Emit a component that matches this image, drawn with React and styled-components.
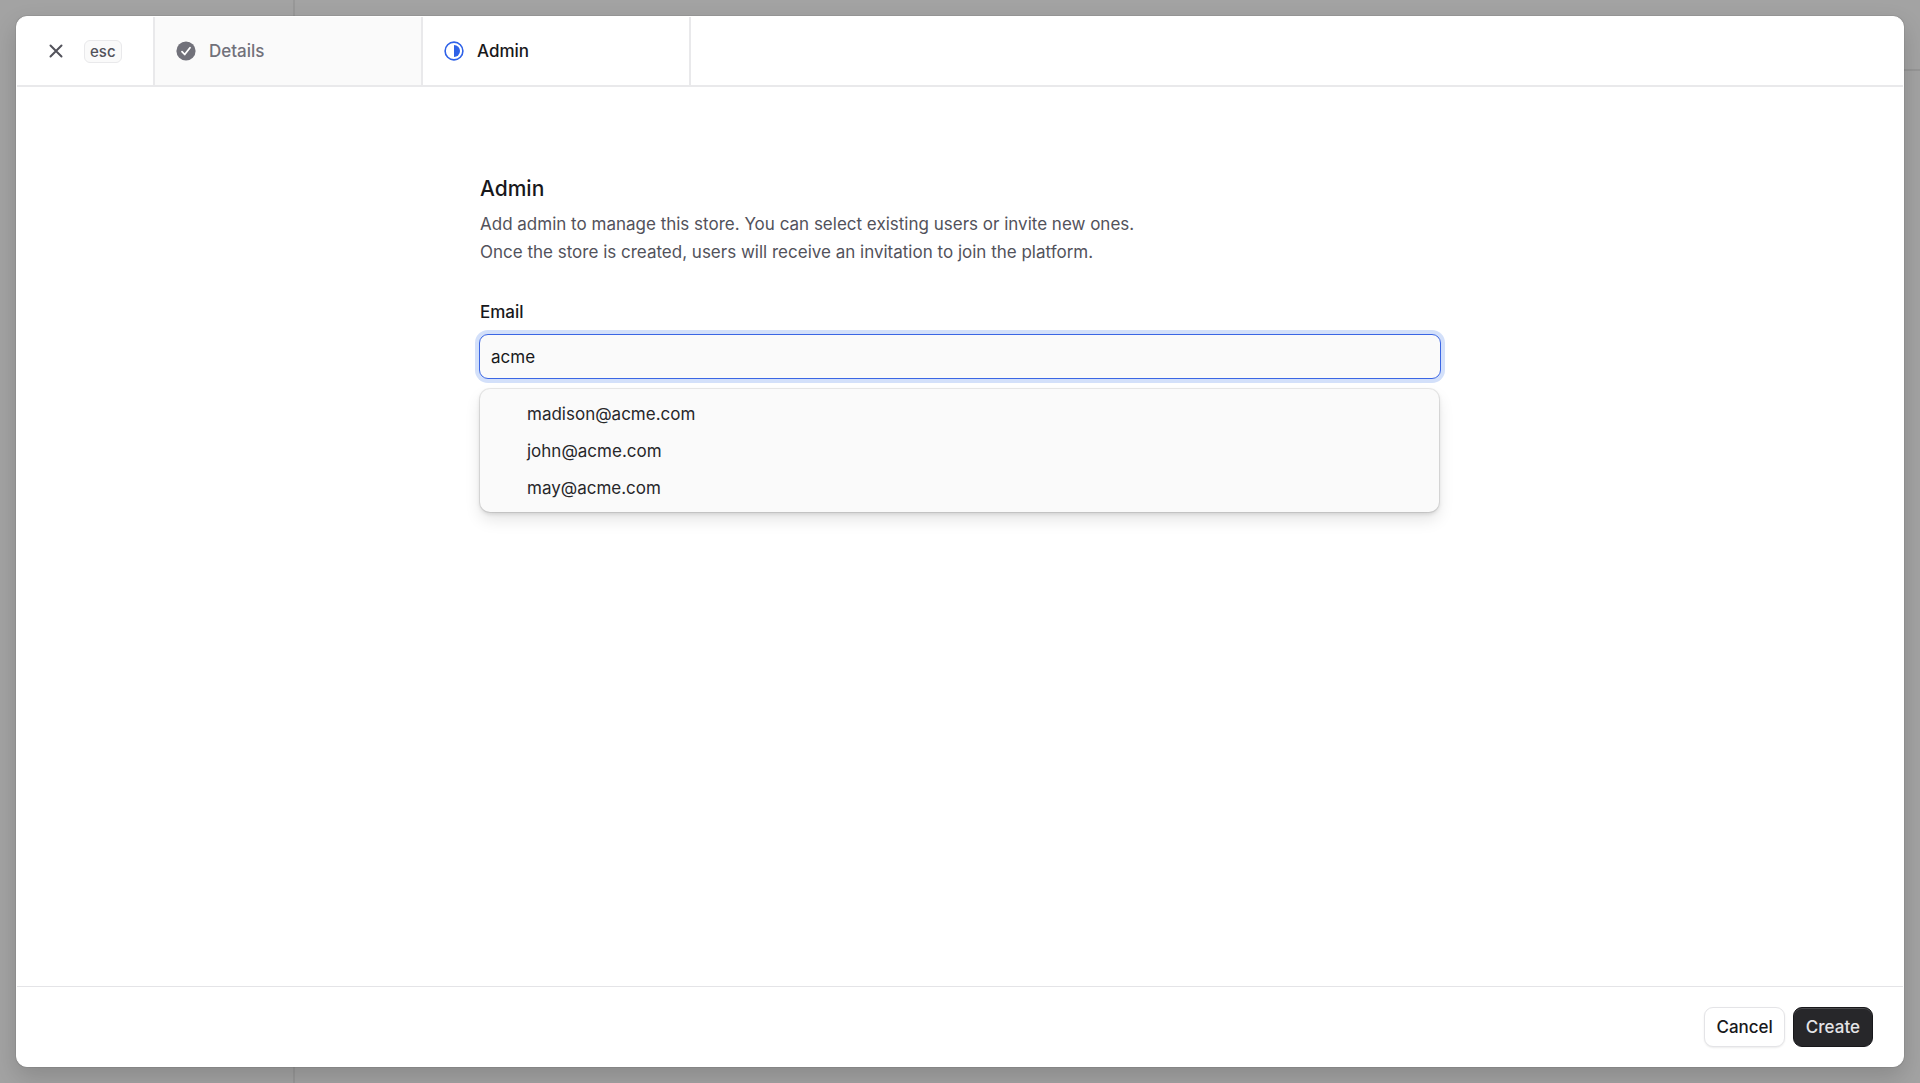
import React, { useState } from "react";
import styled, { createGlobalStyle } from "styled-components";

const GlobalStyle = createGlobalStyle`
  *, *::before, *::after { box-sizing: border-box; }
  body {
    margin: 0;
    background: #a3a3a3;
    color: #18181b;
    font-family: Inter, "Liberation Sans", sans-serif;
    font-size: 17px;
    line-height: 28px;
    -webkit-font-smoothing: antialiased;
  }
  h1, p, ol, ul { margin: 0; padding: 0; }
  ol, ul { list-style: none; }
  button, input { font: inherit; color: inherit; }
`;

const Page = styled.div`
  display: grid;
  min-height: 100vh;
  overflow: hidden;
`;

const Backdrop = styled.div`
  grid-area: 1 / 1;
  display: grid;
  grid-template-columns: 295px 1fr;
`;

const Sidebar = styled.div`
  border-right: 2px solid #989898;
`;

const Topbar = styled.div`
  height: 71px;
  border-bottom: 2px solid #969696;
`;

const Modal = styled.section`
  grid-area: 1 / 1;
  z-index: 1;
  display: flex;
  flex-direction: column;
  margin: 16px;
  overflow: hidden;
  border: 1px solid #fff;
  border-radius: 11px;
  background: #fff;
  box-shadow: 0 0 0 1px rgba(0, 0, 0, 0.06), 0 10px 24px rgba(0, 0, 0, 0.16);
`;

const Header = styled.header`
  display: flex;
  height: 70px;
  border-bottom: 2px solid #e9e9eb;
`;

const CloseArea = styled.div`
  display: flex;
  align-items: center;
  gap: 9px;
  width: 138px;
  padding-left: 20px;
  border-right: 2px solid #e9e9eb;
`;

const CloseButton = styled.button`
  display: grid;
  place-items: center;
  width: 38px;
  height: 38px;
  padding: 0;
  border: 0;
  border-radius: 8px;
  background: transparent;
  color: #52525b;
`;

const Key = styled.kbd`
  padding: 0 5px;
  border: 1px solid #e9e9eb;
  border-radius: 6px;
  background: #fafafa;
  color: #52525b;
  font-family: inherit;
  font-size: 15px;
  font-weight: 500;
  line-height: 21px;
`;

const Steps = styled.ol`
  display: flex;
`;

const Step = styled.li`
  display: flex;
  width: 268px;
  border-right: 2px solid #e9e9eb;
`;

const StepButton = styled.button`
  display: flex;
  flex: 1;
  align-items: center;
  gap: 13px;
  padding: 0 21px;
  border: 0;
  background: ${(p) => (p.$active ? "#fff" : "#fafafa")};
  color: ${(p) => (p.$active ? "#18181b" : "#71717a")};
  font-weight: 500;
`;

const Content = styled.main`
  flex: 1;
  padding: 87px 24px;
`;

const Form = styled.form`
  display: flex;
  flex-direction: column;
  gap: 32px;
  max-width: 960px;
  margin: 0 auto;
`;

const Title = styled.h1`
  margin-bottom: 6px;
  font-size: 21px;
  font-weight: 500;
  line-height: 30px;
`;

const Hint = styled.p`
  color: #52525b;
`;

const Field = styled.div`
  position: relative;
  display: flex;
  flex-direction: column;
  gap: 8px;
`;

const Label = styled.label`
  font-weight: 500;
`;

const TextInput = styled.input`
  height: 45px;
  margin: 0 -1px;
  padding: 0 11px;
  border: 1px solid #3b66e4;
  border-radius: 9px;
  outline: none;
  background: #fafafa;
  box-shadow: 0 0 0 4px #d3e0fa;
`;

const Options = styled.ul`
  position: absolute;
  top: calc(100% + 10px);
  left: 0;
  right: 1px;
  padding: 7px 6px 5px;
  border-radius: 10px;
  background: #fafafa;
  box-shadow: 0 0 0 1px rgba(0, 0, 0, 0.08), 0 2px 4px rgba(0, 0, 0, 0.12),
    0 8px 16px rgba(0, 0, 0, 0.1);
`;

const Option = styled.li`
  padding: 0 41px;
  color: #27272a;
  line-height: 37px;
`;

const Footer = styled.footer`
  display: flex;
  justify-content: flex-end;
  gap: 8px;
  padding: 20px 30px 19px;
  border-top: 1px solid #e4e4e7;
`;

const Button = styled.button`
  height: 40px;
  padding: 0 11px;
  border: 1px solid ${(p) => (p.$primary ? "#18181b" : "#e4e4e7")};
  border-radius: 9px;
  background: ${(p) => (p.$primary ? "#27272a" : "#fff")};
  color: ${(p) => (p.$primary ? "#e4e4e7" : "#18181b")};
  padding: 0 ${(p) => (p.$primary ? 12 : 11)}px;
  font-weight: 500;
  box-shadow: ${(p) =>
    p.$primary
      ? "inset 0 1px 0 #4a4a4d"
      : "0 1px 2px rgba(0, 0, 0, 0.08)"};
`;

const CloseIcon = () => (
  <svg width="14" height="14" viewBox="0 0 14 14" fill="none" aria-hidden="true">
    <path d="M1.5 1.5l11 11M12.5 1.5l-11 11" stroke="currentColor" strokeWidth="2" strokeLinecap="round" />
  </svg>
);

const DoneIcon = () => (
  <svg width="20" height="20" viewBox="0 0 20 20" fill="none" aria-hidden="true">
    <circle cx="10" cy="10" r="9.6" fill="#71717a" />
    <path d="M6 10.7l2.7 2.8L14 6.8" stroke="#fff" strokeWidth="1.8" strokeLinecap="round" strokeLinejoin="round" />
  </svg>
);

const CurrentIcon = () => (
  <svg width="20" height="20" viewBox="0 0 20 20" fill="none" aria-hidden="true">
    <circle cx="10" cy="10" r="8.9" stroke="#2f62e8" strokeWidth="1.6" />
    <path d="M10 4a6 6 0 0 1 0 12z" fill="#2f62e8" />
  </svg>
);

const people = ["madison@acme.com", "john@acme.com", "may@acme.com"];

export default function App() {
  const [email, setEmail] = useState("acme");
  return (
    <>
      <GlobalStyle />
      <Page>
        <Backdrop>
          <Sidebar />
          <Topbar />
        </Backdrop>
        <Modal role="dialog" aria-labelledby="admin-title">
          <Header>
            <CloseArea>
              <CloseButton type="button" aria-label="Close">
                <CloseIcon />
              </CloseButton>
              <Key>esc</Key>
            </CloseArea>
            <Steps>
              <Step>
                <StepButton type="button">
                  <DoneIcon />
                  Details
                </StepButton>
              </Step>
              <Step>
                <StepButton type="button" $active aria-current="step">
                  <CurrentIcon />
                  Admin
                </StepButton>
              </Step>
            </Steps>
          </Header>
          <Content>
            <Form id="admin-form" onSubmit={(e) => e.preventDefault()}>
              <div>
                <Title id="admin-title">Admin</Title>
                <Hint>
                  Add admin to manage this store. You can select existing users or invite new ones.
                  <br />
                  Once the store is created, users will receive an invitation to join the platform.
                </Hint>
              </div>
              <Field>
                <Label htmlFor="email">Email</Label>
                <TextInput
                  id="email"
                  type="text"
                  autoComplete="off"
                  role="combobox"
                  aria-expanded="true"
                  aria-controls="email-options"
                  value={email}
                  onChange={(e) => setEmail(e.target.value)}
                />
                <Options id="email-options" role="listbox">
                  {people.map((person) => (
                    <Option key={person} role="option" aria-selected="false" onClick={() => setEmail(person)}>
                      {person}
                    </Option>
                  ))}
                </Options>
              </Field>
            </Form>
          </Content>
          <Footer>
            <Button type="button">Cancel</Button>
            <Button type="submit" form="admin-form" $primary>
              Create
            </Button>
          </Footer>
        </Modal>
      </Page>
    </>
  );
}
